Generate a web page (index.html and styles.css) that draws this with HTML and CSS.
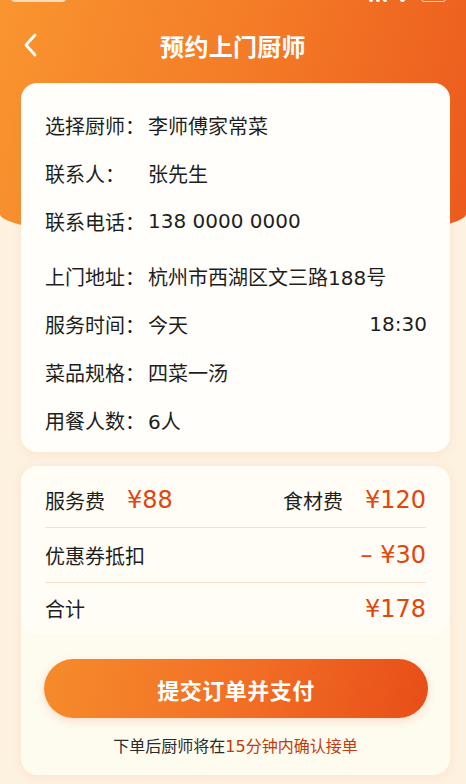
FILE: index.html
```html
<!DOCTYPE html>
<html>
<head>
    <meta charset="utf-8">
    <meta name="viewport" content="width=device-width, initial-scale=1.0">
    <title>预约上门厨师</title>
    <link rel="stylesheet" href="styles.css">
</head>
<body>
    <div class="page">
        <header class="hero">
            <div class="status-bar">
                <span class="status-pill"></span>
                <span class="status-right">
                    <span class="dot"></span><span class="dot"></span><span class="dot"></span>
                    <span class="wifi"></span>
                    <span class="battery"></span>
                </span>
            </div>
            <div class="nav-bar">
                <svg class="back" width="16" height="26" viewBox="0 0 16 26">
                    <polyline points="12,3 3,13 12,23" fill="none" stroke="#fff" stroke-width="2.8" stroke-linecap="round" stroke-linejoin="round"/>
                </svg>
                <h1 class="title">预约上门厨师</h1>
            </div>
        </header>

        <main class="content">
            <!-- 订单信息 -->
            <section class="card info-card">
                <div class="info-row"><span class="info-label">选择厨师：</span><span class="info-value">李师傅家常菜</span></div>
                <div class="info-row"><span class="info-label">联系人：</span><span class="info-value">张先生</span></div>
                <div class="info-row"><span class="info-label">联系电话：</span><span class="info-value">138 0000 0000</span></div>
                <div class="info-row gap-top"><span class="info-label">上门地址：</span><span class="info-value">杭州市西湖区文三路188号</span></div>
                <div class="info-row"><span class="info-label">服务时间：</span><span class="info-value">今天</span><span class="info-extra">18:30</span></div>
                <div class="info-row"><span class="info-label">菜品规格：</span><span class="info-value">四菜一汤</span></div>
                <div class="info-row"><span class="info-label">用餐人数：</span><span class="info-value">6人</span></div>
            </section>

            <!-- 费用 -->
            <section class="card pay-card">
                <div class="price-box">
                    <div class="price-row">
                        <div class="price-pair">
                            <span class="price-label">服务费</span>
                            <span class="price">¥88</span>
                        </div>
                        <div class="price-pair">
                            <span class="price-label">食材费</span>
                            <span class="price">¥120</span>
                        </div>
                    </div>
                    <div class="price-row">
                        <span class="price-label">优惠券抵扣</span>
                        <span class="price">– ¥30</span>
                    </div>
                    <div class="price-row last">
                        <span class="price-label">合计</span>
                        <span class="price">¥178</span>
                    </div>
                </div>
                <button type="button" class="submit-btn">提交订单并支付</button>
                <p class="tip">下单后厨师将在<span class="tip-hl">15分钟内确认接单</span></p>
            </section>
        </main>
    </div>
</body>
</html>
```

FILE: styles.css
```css
* {
    box-sizing: border-box;
}
body {
    margin: 0;
    background: #fdf1e0;
    font-family: "DejaVu Sans", "Noto Sans CJK SC", sans-serif;
    color: #1e1e1e;
}
.page {
    width: 466px;
    height: 784px;
    overflow: hidden;
}

/* 顶部橙色区域 */
.hero {
    height: 240px;
    padding-top: 0;
    background: linear-gradient(105deg, #f9952f 0%, #f47b27 50%, #ec5a1d 100%);
    border-radius: 0 0 50% 50% / 0 0 26px 26px;
}
.status-bar {
    height: 2px;
    overflow: hidden;
    display: flex;
    align-items: flex-end;
    justify-content: space-between;
    padding: 0 20px 0 11px;
}
.status-pill {
    flex-shrink: 0;
    width: 55px;
    height: 12px;
    border-radius: 4px;
    background: rgba(255, 240, 220, 0.8);
}
.status-right {
    flex-shrink: 0;
    display: flex;
    align-items: flex-end;
    gap: 3px;
}
.dot {
    width: 4px;
    height: 8px;
    border-radius: 2px;
    background: #fff;
}
.wifi {
    width: 5px;
    height: 8px;
    margin: 0 13px 0 10px;
    border-radius: 0 0 3px 3px;
    background: #fff;
}
.battery {
    width: 25px;
    height: 12px;
    border: 1px solid rgba(255, 255, 255, 0.7);
    border-radius: 3px;
}
.nav-bar {
    display: flex;
    align-items: center;
    height: 86px;
    padding: 0 0 0 23px;
}
.back {
    display: block;
}
.title {
    flex: 1;
    margin: 0 39px 0 0;
    text-align: center;
    color: #fff;
    font-family: "Noto Sans CJK SC", sans-serif;
    font-size: 24px;
    font-weight: 700;
    letter-spacing: 0.3px;
}

/* 卡片 */
.content {
    margin-top: -157px;
    padding: 0 16px 0 21px;
    display: flex;
    flex-direction: column;
    gap: 14px;
}
.card {
    border-radius: 16px;
    box-shadow: 0 2px 10px rgba(230, 150, 80, 0.12);
}
.info-card {
    background: #fffefb;
    padding: 18px 23px 8px 24px;
}
.info-row {
    display: flex;
    align-items: center;
    height: 48px;
    font-size: 20px;
}
.info-row.gap-top {
    margin-top: 7px;
}
.info-label {
    width: 103px;
    flex-shrink: 0;
}
.info-value {
    flex: 1;
}

.pay-card {
    background: #fefbef;
    padding-bottom: 18px;
}
.price-box {
    background: #fffdf6;
    border-radius: 16px;
    padding: 7px 24px 0 24px;
}
.price-row {
    display: flex;
    align-items: center;
    justify-content: space-between;
    height: 55px;
    border-bottom: 1px solid #f8dfc6;
}
.price-row.last {
    height: 51px;
    border-bottom: none;
}
.price-pair {
    display: flex;
    align-items: center;
    gap: 22px;
}
.price-label {
    font-size: 20px;
}
.price {
    color: #e2460f;
    font-size: 24px;
}

.submit-btn {
    display: block;
    width: 384px;
    height: 59px;
    margin: 25px auto 0 23px;
    border: none;
    border-radius: 30px;
    background: linear-gradient(100deg, #f68b2b 0%, #f27026 50%, #e84e18 100%);
    box-shadow: 0 3px 8px rgba(232, 90, 30, 0.18);
    color: #fff;
    font-family: "Noto Sans CJK SC", sans-serif;
    font-size: 22px;
    font-weight: 700;
    letter-spacing: 0.5px;
}
.tip {
    margin: 15px 0 0 0;
    text-align: center;
    font-size: 16px;
    color: #2a2a2a;
}
.tip-hl {
    color: #c23a10;
}
```
